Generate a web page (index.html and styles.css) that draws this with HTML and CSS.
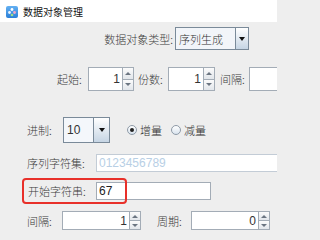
FILE: index.html
```html
<!DOCTYPE html>
<html lang="zh">
<head>
<meta charset="utf-8">
<title>数据对象管理</title>
<link rel="stylesheet" href="styles.css">
</head>
<body>
<div class="titlebar">
  <svg class="appicon" width="12" height="12" viewBox="0 0 12 12">
    <defs>
      <linearGradient id="ig" x1="0" y1="0" x2="0" y2="1">
        <stop offset="0" stop-color="#63b0f2"/>
        <stop offset="1" stop-color="#2a7fd8"/>
      </linearGradient>
    </defs>
    <rect x="0" y="0" width="12" height="12" rx="2" fill="url(#ig)"/>
    <circle cx="6" cy="3.5" r="1.4" fill="#ffffff"/>
    <circle cx="3.5" cy="6.5" r="1.4" fill="#e9f4ff"/>
    <circle cx="8.5" cy="6.5" r="1.4" fill="#f3a7c6"/>
    <circle cx="6" cy="9" r="1.3" fill="#9fe08a"/>
  </svg>
  <span class="title-text">数据对象管理</span>
</div>

<div class="row row-type">
  <span class="label label-type">数据对象类型:</span>
  <div class="combo combo-type">
    <span class="combo-value">序列生成</span>
    <span class="combo-btn"><span class="tri-down"></span></span>
  </div>
</div>

<div class="row row-spin">
  <span class="label w-start">起始:</span>
  <div class="spinner spin-big">
    <span class="spin-field w-f1">1</span>
    <span class="spin-btns"><span class="sb up"><i class="t-up"></i></span><span class="sb down"><i class="t-down"></i></span></span>
  </div>
  <span class="label w-count">份数:</span>
  <div class="spinner spin-big">
    <span class="spin-field w-f2">1</span>
    <span class="spin-btns"><span class="sb up"><i class="t-up"></i></span><span class="sb down"><i class="t-down"></i></span></span>
  </div>
  <span class="label w-gap">间隔:</span>
  <div class="spinner spin-big">
    <span class="spin-field w-f3"></span>
  </div>
</div>

<div class="row row-radix">
  <span class="label w-radix">进制:</span>
  <div class="combo combo-radix">
    <span class="combo-value">10</span>
    <span class="combo-btn"><span class="tri-down"></span></span>
  </div>
  <label class="radio first"><span class="dot on"></span>增量</label>
  <label class="radio"><span class="dot"></span>减量</label>
</div>

<div class="row row-charset">
  <span class="label w-long">序列字符集:</span>
  <span class="field field-disabled">0123456789</span>
</div>

<div class="row row-startstr">
  <span class="label w-long">开始字符串:</span>
  <span class="field field-start">67</span>
  <span class="highlight"></span>
</div>

<div class="row row-spin2">
  <span class="label w-interval">间隔:</span>
  <div class="spinner spin-small">
    <span class="spin-field w-s">1</span>
    <span class="spin-btns"><span class="sb up"><i class="t-up"></i></span><span class="sb down"><i class="t-down"></i></span></span>
  </div>
  <span class="label w-period">周期:</span>
  <div class="spinner spin-small">
    <span class="spin-field w-s">0</span>
    <span class="spin-btns"><span class="sb up"><i class="t-up"></i></span><span class="sb down"><i class="t-down"></i></span></span>
  </div>
</div>
</body>
</html>
```

FILE: styles.css
```css
html, body {
  margin: 0;
  padding: 0;
}
body {
  width: 277px;
  height: 240px;
  overflow: hidden;
  background: #eeeeee;
  font-family: "Noto Sans CJK SC", "Noto Sans", sans-serif;
  font-size: 11px;
  font-weight: 300;
  color: #3a3a3a;
}
.titlebar {
  height: 22px;
  background: #ffffff;
  display: flex;
  align-items: center;
  padding-left: 6px;
  box-sizing: border-box;
}
.appicon {
  display: block;
  margin-top: 2px;
}
.title-text {
  margin-left: 5px;
  font-size: 10px;
  font-weight: 400;
  color: #111111;
  margin-top: 1px;
}
.row {
  display: flex;
  align-items: center;
  white-space: nowrap;
}
.label {
  flex: none;
  line-height: 14px;
}

/* row 1 */
.row-type {
  margin-top: 5px;
  padding-left: 100px;
}
.label-type { width: 73px; margin-right: 2px; text-align: right; }
.combo {
  display: flex;
  box-sizing: border-box;
  border: 1px solid #7a8a99;
  background: #f2f5f9;
  flex: none;
}
.combo-type { width: 74px; height: 23px; }
.combo-value {
  flex: 1;
  padding-left: 3px;
  display: flex;
  align-items: center;
  color: #333333;
}
.combo-btn {
  width: 12px;
  flex: none;
  border-left: 1px solid #7a8a99;
  background: linear-gradient(#ffffff, #c6d5e4);
  display: flex;
  align-items: center;
  justify-content: center;
}
.combo-radix .combo-btn { width: 15px; }
.tri-down {
  width: 0;
  height: 0;
  border-left: 3.5px solid transparent;
  border-right: 3.5px solid transparent;
  border-top: 4px solid #111111;
}

/* spinners */
.row-spin {
  margin-top: 17px;
  padding-left: 57px;
}
.w-start { width: 31px; }
.w-count { width: 30px; margin-left: 4px; }
.w-gap { width: 29px; margin-left: 5px; }
.spinner {
  display: flex;
  flex: none;
}
.spin-big { height: 24px; }
.spin-small { height: 19px; }
.spin-field {
  box-sizing: border-box;
  border: 1px solid #a3acb6;
  border-right: none;
  background: #ffffff;
  display: flex;
  align-items: center;
  justify-content: flex-end;
  padding-right: 2px;
  color: #333333;
  font-family: "Liberation Sans", Arial, sans-serif;
  font-weight: 400;
  font-size: 12px;
}
.w-f1 { width: 34px; }
.w-f2 { width: 35px; }
.w-f3 { width: 40px; border-right: 1px solid #a3acb6; }
.w-s { width: 67px; }
.spin-btns {
  width: 12px;
  display: flex;
  flex-direction: column;
  box-sizing: border-box;
  border: 1px solid #a3acb6;
}
.sb {
  flex: 1;
  background: linear-gradient(#fbfbfb, #e2e6eb);
  display: flex;
  align-items: center;
  justify-content: center;
}
.sb.up { border-bottom: 1px solid #a3acb6; }
.t-up, .t-down {
  display: block;
  width: 0;
  height: 0;
  border-left: 3px solid transparent;
  border-right: 3px solid transparent;
}
.t-up { border-bottom: 3px solid #6b7581; }
.t-down { border-top: 3px solid #6b7581; }

/* radix row */
.row-radix {
  margin-top: 26px;
  padding-left: 27px;
}
.w-radix { width: 36px; }
.combo-radix {
  width: 47px;
  height: 26px;
  background: #f4f7fb;
}
.combo-radix .combo-value {
  font-family: "Liberation Sans", Arial, sans-serif;
  font-weight: 400;
  font-size: 12px;
}
.radio {
  display: flex;
  align-items: center;
  color: #333333;
}
.radio.first { margin-left: 17px; }
.radio + .radio { margin-left: 9px; }
.dot {
  width: 10px;
  height: 10px;
  box-sizing: border-box;
  border-radius: 50%;
  border: 1px solid #8e9aa7;
  background: linear-gradient(#ffffff, #d9e3ee);
  margin-right: 3px;
  display: flex;
  align-items: center;
  justify-content: center;
}
.dot.on::after {
  content: "";
  width: 4px;
  height: 4px;
  border-radius: 50%;
  background: #222222;
}

/* text fields */
.row-charset {
  margin-top: 11px;
  padding-left: 27px;
}
.w-long { width: 69px; }
.field {
  box-sizing: border-box;
  height: 18px;
  border: 1px solid #a3acb6;
  background: #ffffff;
  display: flex;
  align-items: center;
  padding-left: 2px;
  flex: none;
  font-family: "Liberation Sans", Arial, sans-serif;
  font-weight: 400;
  font-size: 12px;
}
.field-disabled {
  width: 200px;
  border-color: #c3ccd6;
  color: #b8cfe5;
}
.row-startstr {
  margin-top: 10px;
  padding-left: 28px;
  position: relative;
}
.row-startstr .w-long { width: 68px; }
.field-start {
  width: 115px;
  color: #222222;
}
.highlight {
  position: absolute;
  left: 22px;
  top: -4px;
  width: 105px;
  height: 26px;
  box-sizing: border-box;
  border: 2px solid #e8302a;
  border-radius: 4px;
}

/* last row */
.row-spin2 {
  margin-top: 11px;
  padding-left: 27px;
}
.w-interval { width: 35px; }
.w-period { width: 34px; margin-left: 16px; }
```
